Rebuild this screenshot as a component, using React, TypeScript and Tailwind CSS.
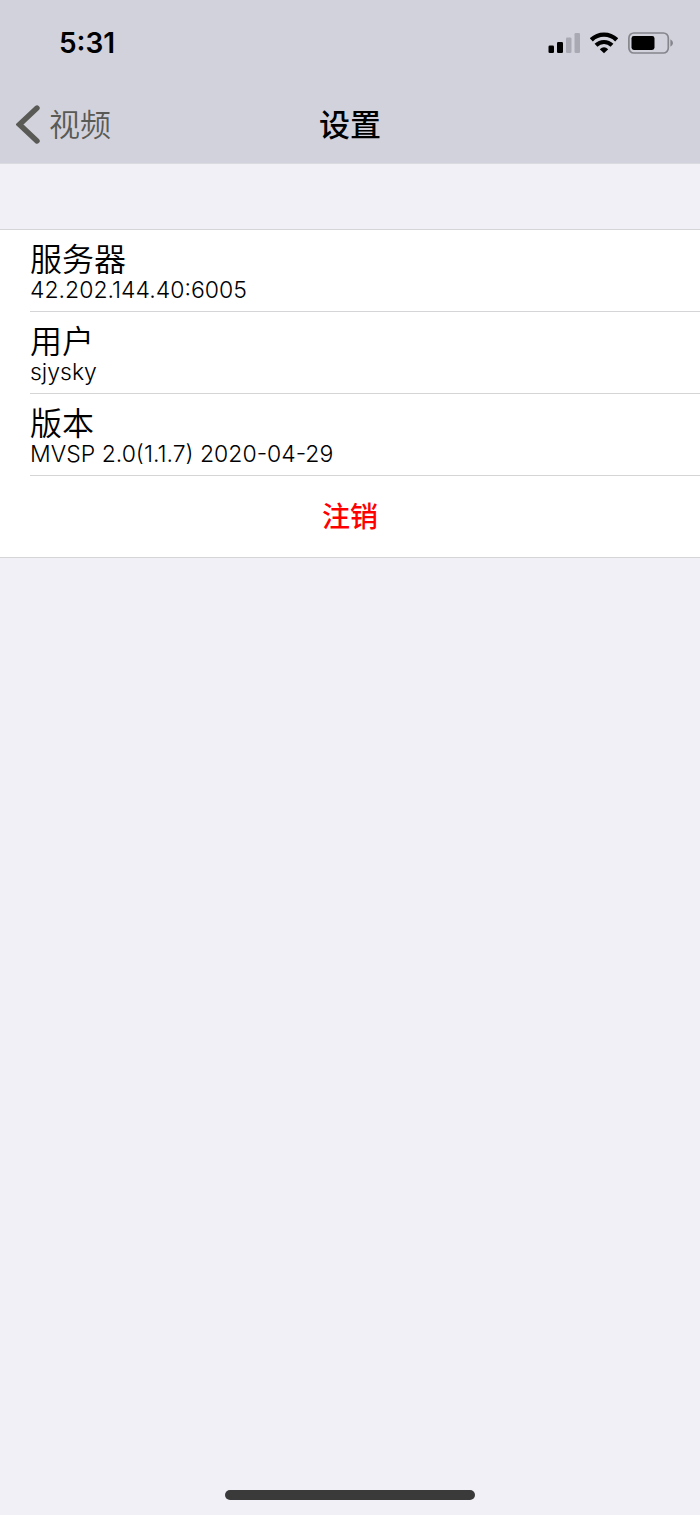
import React from 'react';

interface InfoRowProps {
  label: string;
  value: string;
}

const rows: InfoRowProps[] = [
  { label: '服务器', value: '42.202.144.40:6005' },
  { label: '用户', value: 'sjysky' },
  { label: '版本', value: 'MVSP 2.0(1.1.7) 2020-04-29' },
];

const SignalIcon: React.FC = () => (
  <svg width="32" height="22" viewBox="0 0 32 22" aria-hidden="true">
    <rect x="0.5" y="13.5" width="5.5" height="7.5" rx="1.3" />
    <rect x="9" y="10" width="6" height="11" rx="1.3" />
    <rect x="18" y="5.5" width="5.5" height="15.5" rx="1.3" fill="#a9a9b3" />
    <rect x="26.5" y="1" width="5.5" height="20" rx="1.3" fill="#a9a9b3" />
  </svg>
);

const WifiIcon: React.FC = () => (
  <svg width="28" height="22" viewBox="0 0 28 22" fill="none" stroke="#000" aria-hidden="true">
    <path d="M1.3 7.8 A18.2 18.2 0 0 1 26.7 7.8" strokeWidth="4.4" />
    <path d="M6 13.2 A11.5 11.5 0 0 1 22 13.2" strokeWidth="4.1" />
    <path d="M14 21.2 L9.8 17.2 Q14 13.4 18.2 17.2 Z" fill="#000" stroke="none" />
  </svg>
);

const BatteryIcon: React.FC = () => (
  <svg width="45" height="22" viewBox="0 0 45 22" aria-hidden="true">
    <rect x="0.9" y="1" width="39.4" height="20" rx="5" fill="none" stroke="#85858c" strokeWidth="1.7" />
    <rect x="3.5" y="4" width="23" height="14" rx="2.4" />
    <path d="M42.4 7.2 Q45 8.6 45 11 Q45 13.4 42.4 14.8 Z" fill="#85858c" />
  </svg>
);

const InfoRow: React.FC<InfoRowProps> = ({ label, value }) => (
  <div className="ml-[30px] h-[82px] border-b border-[#d5d5d8] pt-3.5">
    <dt className="text-[32px] leading-8 font-[350]">{label}</dt>
    <dd className="text-[23px] leading-7 font-light">{value}</dd>
  </div>
);

export default function App() {
  return (
    <div className="flex min-h-screen flex-col bg-[#f0f0f6] font-['Inter','Noto_Sans_CJK_SC',sans-serif] text-black">
      <header className="border-b border-[#dadae1] bg-[#d2d2dc]">
        {/* Status bar */}
        <div className="flex h-[86px] items-center justify-between pr-[27px] pl-[59px]">
          <span className="text-[28px] leading-8 font-semibold">5:31</span>
          <div className="flex items-center gap-2.5">
            <SignalIcon />
            <WifiIcon />
            <BatteryIcon />
          </div>
        </div>

        {/* Navigation bar */}
        <nav className="grid h-[77px] grid-cols-3 items-center">
          <button type="button" className="flex items-center gap-2 pl-4 text-[31px] leading-10 font-[350] text-[#595a55]">
            <svg width="25" height="40" viewBox="0 0 25 40" fill="none" stroke="currentColor" strokeWidth="5.4" strokeLinecap="round" aria-hidden="true">
              <path d="M21 3 L3.5 19.5 L21 36" />
            </svg>
            视频
          </button>
          <h1 className="text-center text-[31px] leading-10 font-medium">设置</h1>
        </nav>
      </header>

      <main className="mt-[65px] border-y border-[#d5d5d8] bg-white">
        <dl>
          {rows.map((row) => (
            <InfoRow key={row.label} label={row.label} value={row.value} />
          ))}
        </dl>
        <button type="button" className="h-[81px] w-full text-[28px] leading-10 font-medium text-[#ff0000]">
          注销
        </button>
      </main>

      {/* Home indicator */}
      <div className="mx-auto mt-auto mb-[15px] h-2.5 w-[250px] rounded-full bg-[#3a3a3b]" />
    </div>
  );
}
